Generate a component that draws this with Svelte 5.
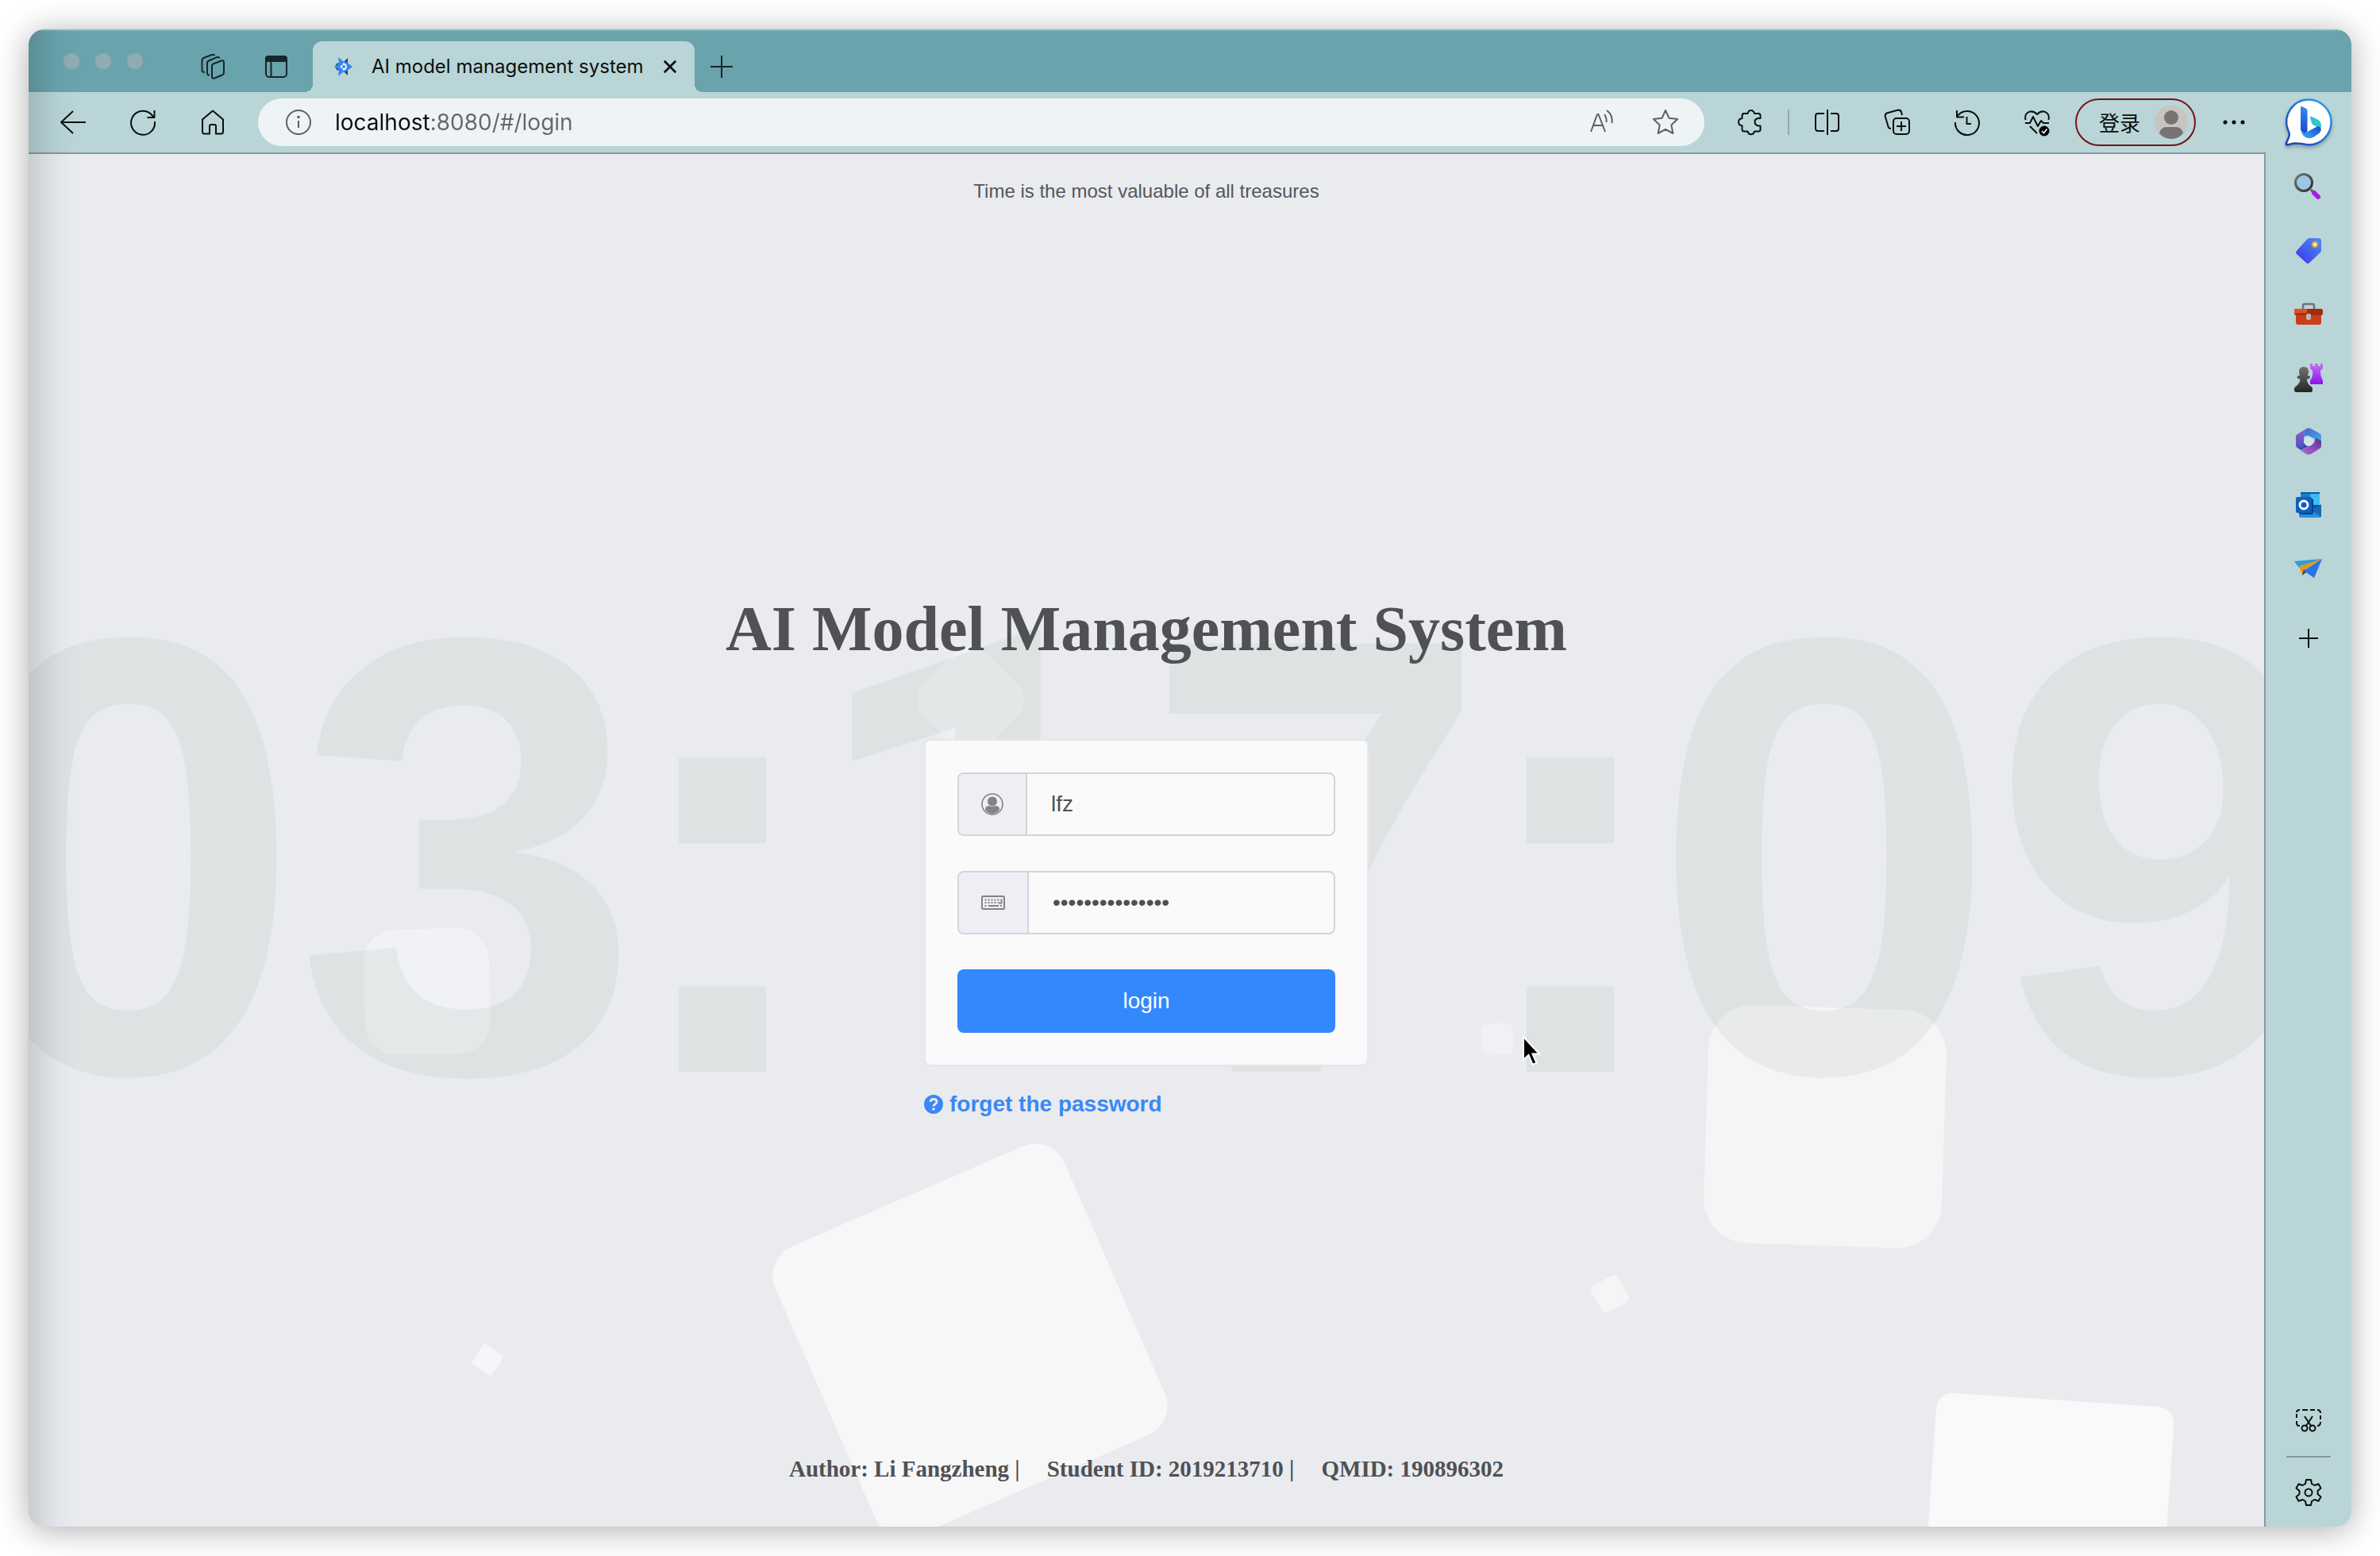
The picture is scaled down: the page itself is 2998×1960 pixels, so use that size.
<script>
  let url = $state('localhost:8080/#/login');
  let username = $state('lfz');
  let password = $state('modelmanager123');

  // Floating squares behind the form: centre, side, corner radius, angle, fill
  const squares = [
    { x: 1186, y: 1495, s: 397, r: 40, a: -23.5, f: '#f7f7f7' },
    { x: 2263, y: 1225, s: 300, r: 56, a: 1.8, f: '#f5f5f5' },
    { x: 2544, y: 1719, s: 300, r: 21, a: 3.8, f: '#f9f9f9' },
    { x: 502, y: 1055, s: 158, r: 40, a: -1.6, f: '#f1f2f6' },
    { x: 1187, y: 688, s: 112, r: 28, a: 45, f: '#eff0f4' },
    { x: 1850, y: 1115, s: 40, r: 9, a: -2, f: '#f0f1f6' },
    { x: 1992, y: 1436, s: 38, r: 6, a: -30, f: '#f5f5f6' },
    { x: 578, y: 1519, s: 30, r: 3, a: 35, f: '#f5f6f8' }
  ];
  const clock = ['0', '3', ':', '1', '7', ':', '0', '9'];
</script>

<div class="desktop">
  <div class="window">
    <header class="tabs">
      <div class="lights"><i></i><i></i><i></i></div>
      <button class="icon" aria-label="Workspaces">
        <svg viewBox="0 0 32 32"><g class="line dark"><path d="M15.500 13 27 8.500q3-1 3 2v13q0 2-2 3L18 30.500q-3 1-3-2V15q0-1.500 1.500-2.300" /><path d="M12 26.500q-3 .5-3-2.500V11.500q0-2 2-3l10-4.300q3-.7 3.500 1.300" /><path d="M6 22.500q-3.500 1-3.500-2V8q0-2 2-3L15 1q2.500-.8 3.500 1" /></g></svg>
      </button>
      <button class="icon" aria-label="Tab actions">
        <svg viewBox="0 0 32 32"><path fill="#16262a" d="M2 10V6q0-4 4-4h20q4 0 4 4v4z" /><g class="line dark"><rect x="3" y="3" width="26" height="26" rx="4" /><path d="M9.500 10v19" /></g></svg>
      </button>
      <div class="tab">
        <svg class="fav" viewBox="0 0 24 24"><path fill="#2b4258" d="M18 1v8l-5-3zM18 23v-8l-5 3zM4 8l4-1-3 5 3 5-4-1-2-4z" /><path fill="#3388f5" d="M6 0l6 5 4 1 4 3 4 3-4 3-4 3-4 1-6 5 1-8-6-4 6-4z" /><path d="M8 12l5-4v8z" fill="#e4f0fb" /><path fill="#e4f0fb" d="M12 7q5 1 5 5t-5 5z" /><circle cx="13" cy="12" r="2" fill="#3388f5" /></svg>
        <span>AI model management system</span>
        <button class="close" aria-label="Close tab"><svg viewBox="0 0 20 20"><path class="line heavy" d="M2 2l16 16M18 2L2 18" /></svg></button>
      </div>
      <button class="icon" aria-label="New tab"><svg viewBox="0 0 32 32"><path class="line dark" d="M16 2v28M2 16h28" /></svg></button>
    </header>

    <div class="toolbar">
      <nav class="group" aria-label="History">
        <button class="icon" aria-label="Back"><svg viewBox="0 0 32 32"><path class="line" d="M32 16H1M16 2L1 16l15 14" /></svg></button>
        <button class="icon" aria-label="Refresh"><svg viewBox="0 0 32 32"><path class="line" d="M31 15a15 15 0 1 1-5-9.500l4 4.500M30.500 1v9h-9" /></svg></button>
        <button class="icon" aria-label="Home"><svg viewBox="0 0 32 32"><path class="line" d="M3 12.500 16 1.500l13 11V28q0 2.500-2.500 2.500H20V21q0-2-2-2h-4q-2 0-2 2v9.500H5.500Q3 30.500 3 28z" /></svg></button>
      </nav>
      <div class="address">
        <svg class="glyph" viewBox="0 0 32 32"><g class="line grey"><circle cx="16" cy="16" r="15" /><path d="M16 14v9" /></g><circle cx="16" cy="9.500" r="1.800" fill="#5b6163" /></svg>
        <input aria-label="Address" bind:value={url} spellcheck="false" />
        <button class="icon" aria-label="Read aloud"><svg viewBox="0 0 32 32"><path class="line grey" d="M2 28 10 6h1.500L20 28M5 20h12M19 6q3 4 2.500 10M22 1q8 6 6.500 16" /></svg></button>
        <button class="icon" aria-label="Add to favourites"><svg viewBox="0 0 32 32"><path class="line grey" d="M16 1l4.500 9.800 10.700 1.300-7.900 7.300 2.100 10.600L16 24.800 6.600 30l2.100-10.600-7.900-7.300 10.700-1.300z" /></svg></button>
      </div>
      <div class="near">
        <button class="icon" aria-label="Extensions"><svg viewBox="0 0 32 32"><path class="line" d="M7 5h6.500q1-4 4.200-4t4.300 4h5q2.500 0 2.500 2.500V11h-2.500q-4.500.500-4.500 4.600t4.500 4.900h2.500V25q0 2.500-2.500 2.500h-5q-1 3.800-4.300 3.800T13.500 27.500H9Q6.500 27.500 6.500 25v-4.700Q2 20 2 15.800T6.500 11V7.500Q6.500 5 9 5" /></svg></button>
        <span class="rule"></span>
        <div class="group">
          <button class="icon" aria-label="Split screen"><svg viewBox="0 0 32 32"><path class="line" d="M12 5H4Q1 5 1 8v16q0 3 3 3h8M20 5h7q3 0 3 3v16q0 3-3 3h-7M16 0v32" /></svg></button>
          <button class="icon" aria-label="Collections"><svg viewBox="0 0 32 32"><g class="line"><rect x="11" y="11" width="20" height="20" rx="4" /><path d="M21 15v12M15 21h12M8 24q-3 0-3.600-3L.800 9q-.800-3 2-4.500L16 .800q4-.800 5 2.200l1 4" /></g></svg></button>
          <button class="icon" aria-label="History"><svg viewBox="0 0 32 32"><path class="line" d="M1 16A15 15 0 1 0 4 8M3 1v8.500h9M15.500 9v9H21" /></svg></button>
          <button class="icon" aria-label="Browser essentials"><svg viewBox="0 0 32 32"><path class="line" d="M1.500 13Q0 7 4 4q6-4 12 2 6-6 12-2 4 3 2.500 9M1 17h6l4-8 6 12 4-7 3 3h7M7 21l9 9" /><circle cx="25" cy="27" r="6.500" /><path d="M22 27l2.500 2.500 4-5" fill="none" stroke="#fff" stroke-width="1.600" /></svg></button>
        </div>
        <button class="profile">登录
          <svg viewBox="0 0 42 42"><circle cx="21" cy="21" r="21" fill="#c8c4c0" /><circle cx="21" cy="15" r="9" fill="#767472" /><path fill="#767472" d="M6 35q2-8 9-8h12q7 0 9 8-6 7-15 7T6 35z" /></svg>
        </button>
        <button class="icon" aria-label="Settings and more"><svg viewBox="0 0 32 32"><circle cx="5" cy="16" r="2.500" /><circle cx="16" cy="16" r="2.500" /><circle cx="27" cy="16" r="2.500" /></svg></button>
      </div>
      <button class="bing" aria-label="Discover">
        <svg viewBox="0 0 60 60">
          <defs>
            <linearGradient id="ring" x1="1" y1="0" x2="0" y2="1"><stop offset="0" stop-color="#2aa7e8" /><stop offset=".500" stop-color="#2272d8" /><stop offset="1" stop-color="#1b3fae" /></linearGradient>
            <linearGradient id="stem" x1="0" y1="0" x2="0" y2="1"><stop offset="0" stop-color="#2f8eea" /><stop offset="1" stop-color="#1b47cc" /></linearGradient>
            <linearGradient id="bowl" x1="0" y1="1" x2="1" y2="0"><stop offset="0" stop-color="#34b4ee" /><stop offset="1" stop-color="#1a49c8" /></linearGradient>
          </defs>
          <path fill="#fff" stroke="url(#ring)" stroke-width="2.500" d="M30 1.500a28 28 0 1 1 0 57q-9-2-18-2l-9 2q-2 0-1-2.500l3-7q2-4-1-9.500A28 28 0 0 1 30 1.500z" />
          <path fill="url(#stem)" d="M20 11q0-1.500 1.500-1l5 2.500q2 1 2 3V40q0 2-1.500 3-3.500 1.500-5-.500Q20 41 20 38z" />
          <path fill="#2fc4cf" d="M32 24q-.500-2 1.500-1.300l7 3.300q6 3 5.500 10l-3 3q-2-4-6-5-2-.700-3-3z" />
          <path fill="url(#bowl)" d="M20.500 39q1 4 6 4l15-8q4.500 1 4.300 4-.300 3.500-4 6l-5 3.500Q31 51.500 26 49t-5.500-10z" />
        </svg>
      </button>
    </div>

    <div class="body">
      <main class="page">
        <svg class="backdrop" aria-hidden="true">
          {#each squares as q}
            <rect x={q.x - q.s / 2} y={q.y - q.s / 2} width={q.s} height={q.s} rx={q.r} fill={q.f} transform="rotate({q.a} {q.x} {q.y})" />
          {/each}
        </svg>
        <div class="clock">
          {#each clock as c}<span class:colon={c === ':'} class:one={c === '1'}>{c}</span>{/each}
        </div>

        <p class="quote">Time is the most valuable of all treasures</p>

        <section class="center">
          <h1>AI Model Management System</h1>
          <div class="box">
            <form class="card" onsubmit={(e) => e.preventDefault()}>
              <div class="field">
                <label for="user" aria-label="Username"><svg viewBox="0 0 28 28"><circle cx="14" cy="14" r="13" fill="none" stroke="#828389" stroke-width="1.600" /><circle cx="14" cy="10.500" r="6" fill="#828389" /><path fill="#828389" d="M5 21q0-5 5-5 4 2 8 0 5 0 5 5-3.500 5-9 5t-9-5z" /></svg></label>
                <input id="user" type="text" bind:value={username} />
              </div>
              <div class="field">
                <label class="wide" for="pass" aria-label="Password"><svg viewBox="0 0 30 28"><rect x="1" y="6" width="28" height="16" rx="1.500" fill="none" stroke="#828389" stroke-width="2" /><path d="M4.500 10.500h19M4.500 14h17M4.500 18h2.500M24 18h2" stroke="#828389" stroke-width="1.800" stroke-dasharray="2 2" /><path d="M9 18h13M25.500 9.500v5H22" fill="none" stroke="#828389" stroke-width="1.800" /></svg></label>
                <input id="pass" type="password" bind:value={password} />
              </div>
              <button class="login" type="submit">login</button>
            </form>
            <a class="forget" href="#/forget"><svg viewBox="0 0 24 24"><circle cx="12" cy="12" r="12" fill="#3a88f6" /><path d="M8 9q.300-3.500 4-3.500t4 3.200q0 2-2 3.100t-2 2.700" fill="none" stroke="#e9ebef" stroke-width="2.800" /><circle cx="12" cy="18" r="1.800" fill="#e9ebef" /></svg>forget the password</a>
          </div>
        </section>

        <footer>
          <span>Author: Li Fangzheng |</span><span>Student ID: 2019213710 |</span><span>QMID: 190896302</span>
        </footer>

        <svg class="backdrop front" aria-hidden="true">
          <path transform="translate(1882 1111)" d="M1 1v29l6.500-6 5 12 5-2.200-5-11.300h8.500z" fill="#000" stroke="#fff" stroke-width="2" />
        </svg>
      </main>

      <aside class="side">
        <button class="app" aria-label="Search"><svg viewBox="0 0 36 36"><defs><linearGradient id="mg" x1="0" y1="0" x2="1" y2="1"><stop offset="0" stop-color="#777" /><stop offset="1" stop-color="#2d2d2f" /></linearGradient></defs><path d="M21 21l4 4" stroke="#555" stroke-width="3" /><path d="M25 25l5 5" stroke="#a51ce8" stroke-width="6" stroke-linecap="round" /><circle cx="12" cy="12" r="10.500" fill="#9cc6e4" stroke="url(#mg)" stroke-width="3" /></svg></button>
        <button class="app" aria-label="Shopping"><svg viewBox="0 0 36 36"><defs><linearGradient id="tg" x1="1" y1="0" x2="0" y2="1"><stop offset="0" stop-color="#4f8cf6" /><stop offset="1" stop-color="#3c34ec" /></linearGradient></defs><path fill="url(#tg)" d="M19 2h12q3 0 3 3v12q0 2-1.500 3.500L19 33q-2 2-4 0L3 22q-2-2 0-4L16 3.500Q17.500 2 19 2z" /><circle cx="26" cy="10" r="3.200" fill="#fff3b0" stroke="#d3a832" stroke-width="2" /></svg></button>
        <button class="app" aria-label="Tools"><svg viewBox="0 0 36 36"><path d="M11 11V7q0-2 2-2h10q2 0 2 2v4" fill="none" stroke="#6f7679" stroke-width="2.500" /><path fill="#c93f1c" d="M2 16h32v12q0 3-3 3H5q-3 0-3-3z" /><path fill="#a52a10" d="M2 11h32q2 0 2 2v4q0 2-2 2H2q-2 0-2-2v-4q0-2 2-2z" /><path fill="#dc5320" d="M2 11h14v5L0 17v-4q0-2 2-2z" /><rect x="15" y="17" width="6" height="8" rx="2.500" fill="#bcb8b6" /></svg></button>
        <button class="app" aria-label="Games"><svg viewBox="0 0 36 36"><defs><linearGradient id="rk" x1="0" y1="0" x2="0" y2="1"><stop offset="0" stop-color="#c375ea" /><stop offset="1" stop-color="#8c12ee" /></linearGradient><linearGradient id="pw" x1="0" y1="0" x2="0" y2="1"><stop offset="0" stop-color="#77716f" /><stop offset="1" stop-color="#232527" /></linearGradient></defs><path fill="url(#rk)" d="M20 0h3v3h3V0h4v3h3V0h3v6l-3 3q0 8 3 12v5H20v-5q4-4 3-12l-3-3z" /><path fill="url(#pw)" d="M12 4q6 0 6 6 0 3-1.500 5 3.500 0 3.500 2t-4 2.500q0 5 4 8.500 3 1 3 4.500 0 3.500-2 3.500H2q-2 0-2-3.500Q0 29 3 28q4-3.500 4.500-8.500-4-.500-4-2.500t3.500-2Q6 13 6 10q0-6 6-6z" /></svg></button>
        <button class="app" aria-label="Microsoft 365"><svg viewBox="0 0 36 36"><defs><linearGradient id="m1" x1="0" y1="0" x2="0" y2="1"><stop offset="0" stop-color="#9a5cc8" /><stop offset="1" stop-color="#3f55c4" /></linearGradient><linearGradient id="m2" x1="0" y1="0" x2="1" y2="1"><stop offset="0" stop-color="#4a62d0" /><stop offset="1" stop-color="#3fb4f0" /></linearGradient><linearGradient id="m3" x1="1" y1="0" x2="0" y2="1"><stop offset="0" stop-color="#5c2f8c" /><stop offset="1" stop-color="#b86fe0" /></linearGradient></defs><path fill="url(#m1)" d="M2 12q0-2 2-3l11-7q-3 3-3 8v16l-4 2-4-2q-2-1-2-3z" /><path fill="url(#m2)" d="M15 2q3-1.500 6 0l11 6q2 1 2 4v9q-3-5-10-7l-6-3q-4-1-6 2 0-9 3-11z" /><path fill="url(#m3)" d="M34 18v5q0 3-2 4l-11 7q-3 1.500-6 0L6 28q3 1 7-1l9-5q5-3 4-8 8 2 8 4z" /><path fill="#2f3fa6" d="M4 26l4 2q3 0 6-2l4-2-6-4v6z" /><circle cx="18" cy="18" r="6" fill="#cfe2ea" /></svg></button>
        <button class="app" aria-label="Outlook"><svg viewBox="0 0 36 36"><rect x="8" y="2" width="24" height="20" rx="1.500" fill="#1a7fd4" /><path fill="#3bbdf2" d="M20 4h12v14H20z" /><path fill="#0c57a8" d="M8 2h24v2H8zM18 18h16l-12 7z" /><path fill="#2b8edb" d="M6 22h28v10q0 2-2 2H8q-2 0-2-2z" /><path fill="#1767b8" d="M34 17v16L22 25z" /><rect x="6" y="10" width="18" height="20" rx="2" fill="#0a3f86" /><rect x="2" y="8" width="20" height="20" rx="2" fill="#0f5fbe" /><circle cx="12" cy="18" r="5" fill="none" stroke="#fff" stroke-width="2.800" /></svg></button>
        <button class="app" aria-label="Drop"><svg viewBox="0 0 36 36"><path fill="#2e9ad8" d="M0 9l35-3-24 9-5 2z" /><path fill="#df9a22" d="M6 15 35 6 16 18l-6 9z" /><path fill="#3c4657" d="M10 27l2-8 4 3z" /><path fill="#2b72e4" d="M35 6 25 30l-13-9z" /></svg></button>
        <button class="app plus" aria-label="Add"><svg viewBox="0 0 36 36"><path class="line" d="M18 6v24M6 18h24" /></svg></button>
        <span class="fill"></span>
        <button class="app" aria-label="Screenshot"><svg viewBox="0 0 36 36"><g class="line"><path d="M7 24q-4 0-4-3v-3M3 14V9M3 7q0-3 4-3M10 4h7M20 4h6M29 4q4 0 4 4M33 11v5M33 19q0 5-4 5" /><circle cx="13" cy="27" r="3.500" /><circle cx="23" cy="27" r="3.500" /><path d="M13 12l8 12M23 12l-8 12" /></g></svg></button>
        <hr />
        <button class="app" aria-label="Settings"><svg viewBox="0 0 36 36"><path class="line" d="M15 2h6l1 5 3.500 2 5-1.700 3 5.200-4 3.500v4l4 3.500-3 5.200-5-1.700L22 29l-1 5h-6l-1-5-3.500-2-5 1.700-3-5.200 4-3.500v-4l-4-3.500 3-5.200 5 1.700L14 7z" /><circle class="line" cx="18" cy="18" r="4.500" /></svg></button>
      </aside>
    </div>
  </div>
</div>

<style>
  :global(body) { margin: 0; background: #fff; }
  .desktop { box-sizing: border-box; min-height: 100vh; padding: 37px 36px; display: flex; font-family: "Liberation Sans", sans-serif; }
  .window { position: relative; flex: 1; min-width: 0; display: flex; flex-direction: column; border-radius: 20px; overflow: hidden; background: #b9d5d7; box-shadow: 0 4px 40px rgba(0, 0, 0, .33); }
  .window::after { content: ""; position: absolute; inset: 0 auto 0 0; width: 60px; background: linear-gradient(90deg, rgba(0, 0, 0, .13), rgba(30, 60, 80, .04) 60%, transparent); pointer-events: none; }
  button { border: 0; padding: 0; background: none; font: inherit; color: inherit; }
  svg { display: block; }
  .icon { width: 32px; height: 32px; flex: none; }
  .icon svg, .app svg, .bing svg, .close svg { width: 100%; height: 100%; overflow: visible; }
  .line { fill: none; stroke: #0b0f10; stroke-width: 2; stroke-linejoin: round; }
  .dark { stroke: #16262a; }
  .grey { stroke: #5b6163; }
  .heavy { stroke-width: 3; }

  .tabs { display: flex; align-items: center; height: 64px; padding: 15px 43px 0; background: #69a3ac; box-shadow: inset 0 2px #86b9c1; }
  .lights { display: flex; gap: 18px; margin: 0 71px 14px 0; }
  .lights i { width: 20px; height: 20px; border-radius: 50%; background: #8fadb1; border: 1px solid #7b9fa4; }
  .tabs .icon + .icon { margin-left: 48px; }
  .tab { position: relative; display: flex; align-items: center; gap: 24px; height: 64px; margin: 0 18px 0 30px; padding: 0 22px 0 26px; border-radius: 12px 12px 0 0; background: #b9d5d7; font: 24px/32px Inter, sans-serif; color: #0b0f10; }
  .tab::before, .tab::after { content: ""; position: absolute; bottom: 0; width: 10px; height: 10px; }
  .tab::before { right: 100%; background: radial-gradient(circle at 0 0, transparent 10px, #b9d5d7 10px); }
  .tab::after { left: 100%; background: radial-gradient(circle at 100% 0, transparent 10px, #b9d5d7 10px); }
  .fav { width: 24px; height: 24px; }
  .close { width: 18px; height: 18px; }

  .toolbar { display: flex; align-items: center; height: 76px; padding: 0 24px 0 40px; gap: 41px; }
  .group { display: flex; gap: 56px; }
  .near { display: flex; align-items: center; gap: 32px; }
  .rule { width: 2px; height: 32px; background: #94a9ac; }
  .address { flex: 1; min-width: 0; display: flex; align-items: center; gap: 48px; height: 60px; box-sizing: border-box; padding: 0 33px 0 35px; border-radius: 30px; background: #eef4f5; }
  .glyph { width: 32px; height: 32px; flex: none; margin-right: -18px; }
  .address input { flex: 1; min-width: 0; border: 0; padding: 0; outline: 0; font: 28px/40px Inter, sans-serif; color: #0b0f10; background: linear-gradient(90deg, #0b0f10 122px, #63686a 122px); -webkit-background-clip: text; background-clip: text; -webkit-text-fill-color: transparent; }
  .profile { display: flex; align-items: center; gap: 18px; height: 60px; padding: 0 8px 0 28px; border: 2px solid #761216; border-radius: 30px; font: 26px/32px "Noto Sans CJK SC", sans-serif; color: #0b0f10; white-space: nowrap; }
  .profile svg { width: 42px; height: 42px; }
  .bing { width: 60px; height: 60px; flex: none; margin-left: 7px; filter: drop-shadow(0 3px 2px rgba(0, 0, 0, .25)); }

  .body { flex: 1; display: flex; min-height: 0; }
  .page { position: relative; flex: 1; min-width: 0; overflow: hidden; display: flex; flex-direction: column; align-items: center; background: #e9ebef; border-top: 2px solid #8b979d; }
  .backdrop { position: absolute; inset: 0; width: 100%; height: 100%; }
  .front { pointer-events: none; }
  .clock { position: absolute; inset: 0; display: flex; flex-wrap: nowrap; align-items: center; justify-content: center; padding-top: 39px; color: rgba(70, 100, 55, .062); font: bold 784px/900px "Liberation Sans", sans-serif; }
  .clock span { flex: none; display: flex; justify-content: center; width: 427px; }
  .clock .colon { width: 214px; }
  .clock .one { font: bold 768px/920px Roboto, sans-serif; }
  .quote { position: relative; margin: 0; padding-top: 33px; font-size: 24px; line-height: 28px; color: #545659; }
  .center { position: relative; flex: 1; display: flex; flex-direction: column; align-items: center; justify-content: center; padding-top: 66px; }
  h1 { margin: 0 0 91px; font: bold 80px/96px "Liberation Serif", serif; color: #505152; }
  .card { display: flex; flex-direction: column; gap: 44px; box-sizing: border-box; width: 560px; padding: 40px; border: 2px solid #e4e7ed; border-radius: 8px; background: #fafafa; }
  .field { display: flex; box-sizing: border-box; height: 80px; border: 2px solid #d2d4da; border-radius: 8px; overflow: hidden; }
  .field label { flex: none; display: flex; align-items: center; justify-content: center; width: 84px; background: #eeeff4; border-right: 2px solid #d2d4da; }
  .field .wide { width: 86px; }
  .field label svg { height: 28px; }
  .field input { flex: 1; min-width: 0; border: 0; outline: 0; padding: 0 30px; background: none; font: 28px/40px "Liberation Sans", sans-serif; color: #4f5054; }
  .login { height: 80px; border-radius: 8px; background: #3388fc; color: #fff; font-size: 28px; }
  .forget { display: flex; align-items: center; gap: 8px; margin-top: 28px; font-size: 28px; font-weight: bold; line-height: 40px; color: #3a88f6; text-decoration: none; }
  .forget svg { width: 24px; height: 24px; }
  footer { position: relative; display: flex; gap: 34px; padding-bottom: 57px; font: bold 29px/32px "Liberation Serif", serif; color: #505154; }

  .side { box-sizing: border-box; width: 110px; display: flex; flex-direction: column; align-items: center; gap: 44px; padding: 26px 0 25px; border-left: 2px solid #8b979d; }
  .app { width: 36px; height: 36px; flex: none; }
  .plus { margin-top: 8px; }
  .fill { flex: 1; }
  hr { width: 56px; height: 2px; margin: -18px 0; border: 0; background: #849a9e; }
</style>
